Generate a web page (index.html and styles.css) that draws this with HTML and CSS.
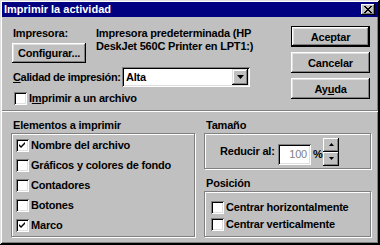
FILE: index.html
```html
<!DOCTYPE html>
<html lang="es">
<head>
    <meta charset="UTF-8">
    <title>Imprimir la actividad</title>
    <link rel="stylesheet" href="styles.css">
</head>
<body>
    <div class="window">
        <div class="titlebar">
            <span class="title">Imprimir la actividad</span>
            <span class="close">
                <svg width="8" height="7" viewBox="0 0 8 7"><path d="M0 0 L7 7 M1 0 L8 7 M7 0 L0 7 M8 0 L1 7" stroke="#000" stroke-width="1"/></svg>
            </span>
        </div>

        <div class="top">
            <div class="top-left">
                <div class="printer-row">
                    <div class="printer-col">
                        <div class="label">Impresora:</div>
                        <div class="btn btn-config">Confi<u>g</u>urar...</div>
                    </div>
                    <div class="printer-name">Impresora predeterminada (HP<br>DeskJet 560C Printer en LPT1:)</div>
                </div>
                <div class="quality-row">
                    <div class="quality-label"><u>C</u>alidad de impresión:</div>
                    <div class="select">
                        <span class="select-value">Alta</span>
                        <span class="select-arrow">
                            <svg width="7" height="4" viewBox="0 0 7 4"><path d="M0 0 H7 L3.5 4 Z" fill="#000"/></svg>
                        </span>
                    </div>
                </div>
                <div class="check-row file-row">
                    <span class="check"></span>
                    <span>I<u>m</u>primir a un archivo</span>
                </div>
            </div>
            <div class="buttons">
                <div class="btn btn-default">Aceptar</div>
                <div class="btn">Cancelar</div>
                <div class="btn">Ay<u>u</u>da</div>
            </div>
        </div>

        <div class="separator"></div>

        <div class="bottom">
            <div class="group group-items">
                <div class="group-label">Elementos a imprimir</div>
                <div class="frame items-frame">
                    <div class="check-row"><span class="check checked"></span><span>Nombre del archivo</span></div>
                    <div class="check-row"><span class="check"></span><span>Gráficos y colores de fondo</span></div>
                    <div class="check-row"><span class="check"></span><span>Contadores</span></div>
                    <div class="check-row"><span class="check"></span><span>Botones</span></div>
                    <div class="check-row"><span class="check checked"></span><span>Marco</span></div>
                </div>
            </div>
            <div class="side">
                <div class="group-label">Tamaño</div>
                <div class="frame size-frame">
                    <span class="reduce-label">Reducir al:</span>
                    <span class="input">100</span>
                    <span class="percent">%</span>
                    <span class="spinner">
                        <span class="spin">
                            <svg width="5" height="3" viewBox="0 0 5 3"><path d="M2.5 0 L5 3 H0 Z" fill="#000"/></svg>
                        </span>
                        <span class="spin">
                            <svg width="5" height="3" viewBox="0 0 5 3"><path d="M0 0 H5 L2.5 3 Z" fill="#000"/></svg>
                        </span>
                    </span>
                </div>
                <div class="group-label pos-label">Posición</div>
                <div class="frame pos-frame">
                    <div class="check-row"><span class="check"></span><span>Centrar horizontalmente</span></div>
                    <div class="check-row"><span class="check"></span><span>Centrar verticalmente</span></div>
                </div>
            </div>
        </div>
    </div>
</body>
</html>
```

FILE: styles.css
```css
body {
    margin: 0;
    background: #c0c0c0;
    font-family: "Liberation Sans", Arial, sans-serif;
    font-size: 11px;
    font-weight: bold;
    color: #000;
    letter-spacing: -0.2px;
    white-space: nowrap;
}
u {
    text-decoration: underline;
    text-underline-offset: 1px;
}
.window {
    width: 380px;
    height: 245px;
    box-sizing: border-box;
    padding: 2px 2px 4px 2px;
    background: #c0c0c0;
    box-shadow: inset -1px -1px #000, inset 1px 1px #dfdfdf,
                inset -2px -2px #000, inset 2px 2px #fff,
                inset -3px -3px #808080;
    display: flex;
    flex-direction: column;
}
.titlebar {
    height: 15px;
    background: #000080;
    color: #fff;
    display: flex;
    align-items: center;
    justify-content: space-between;
    padding: 0 3px 0 2px;
}
.title {
    line-height: 15px;
    letter-spacing: 0;
}
.close {
    width: 14px;
    height: 11px;
    background: #c0c0c0;
    box-shadow: inset -1px -1px #000, inset 1px 1px #fff, inset -2px -2px #808080;
    display: flex;
    align-items: center;
    justify-content: center;
}
.close svg {
    margin: -1px 0 0 -1px;
}

/* upper part */
.top {
    height: 93px;
    display: flex;
    padding: 10px 8px 0 11px;
    box-sizing: border-box;
}
.top-left {
    flex: 1;
}
.printer-row {
    display: flex;
}
.printer-col {
    width: 83px;
}
.label, .printer-name, .quality-label, .group-label {
    line-height: 13px;
}
.btn {
    height: 21px;
    box-sizing: border-box;
    display: flex;
    align-items: center;
    justify-content: center;
    background: #c0c0c0;
    box-shadow: inset -1px -1px #000, inset 1px 1px #fff,
                inset -2px -2px #808080, inset 2px 2px #dfdfdf;
}
.btn-config {
    width: 74px;
    height: 20px;
    margin: 3px 0 0 -1px;
}
.quality-row {
    display: flex;
    align-items: center;
    margin-top: 4px;
}
.quality-label {
    width: 109px;
    letter-spacing: -0.35px;
}
.select {
    width: 128px;
    height: 20px;
    box-sizing: border-box;
    background: #fff;
    box-shadow: inset 1px 1px #808080, inset -1px -1px #fff,
                inset 2px 2px #000, inset -2px -2px #dfdfdf;
    display: flex;
    align-items: center;
    justify-content: space-between;
    padding: 2px;
}
.select-value {
    padding-left: 2px;
}
.select-arrow {
    width: 16px;
    height: 16px;
    box-sizing: border-box;
    background: #c0c0c0;
    box-shadow: inset -1px -1px #000, inset 1px 1px #dfdfdf,
                inset -2px -2px #808080, inset 2px 2px #fff;
    display: flex;
    align-items: center;
    justify-content: center;
}
.check-row {
    display: flex;
    align-items: center;
    gap: 2px;
    height: 13px;
    line-height: 13px;
}
.file-row {
    margin: 5px 0 0 1px;
}
.check {
    width: 13px;
    height: 13px;
    box-sizing: border-box;
    background: #fff;
    box-shadow: inset 1px 1px #808080, inset -1px -1px #fff,
                inset 2px 2px #000, inset -2px -2px #dfdfdf;
    flex: none;
}
.check.checked {
    background: #fff url("data:image/svg+xml,%3Csvg xmlns='http://www.w3.org/2000/svg' width='13' height='13'%3E%3Cpath d='M3 5 L5 7 L9 3 V5 L5 9 L3 7 Z' fill='%23000'/%3E%3C/svg%3E") no-repeat;
}
.buttons {
    width: 79px;
    display: flex;
    flex-direction: column;
    gap: 5px;
    margin-top: -1px;
}
.btn-default {
    box-shadow: inset 0 0 0 1px #000,
                inset -2px -2px #000, inset 2px 2px #fff,
                inset -3px -3px #808080, inset 3px 3px #dfdfdf;
}

.separator {
    border-top: 1px solid #808080;
    border-bottom: 1px solid #fff;
}

/* lower part */
.bottom {
    flex: 1;
    display: flex;
    gap: 9px;
    padding: 0 7px 0 9px;
}
.group-label {
    margin: 7px 0 1px 2px;
}
.frame {
    border: 1px solid #808080;
    box-shadow: inset 1px 1px #fff, 1px 1px #fff;
    box-sizing: border-box;
}
.group-items {
    width: 184px;
}
.items-frame {
    height: 104px;
    padding: 5px 0 0 4px;
    display: flex;
    flex-direction: column;
    gap: 7px;
}
.side {
    flex: 1;
}
.size-frame {
    height: 36px;
    display: flex;
    align-items: center;
    padding-left: 15px;
}
.reduce-label {
    width: 58px;
}
.input {
    width: 33px;
    height: 21px;
    box-sizing: border-box;
    background: #fff;
    color: #808080;
    font-weight: normal;
    box-shadow: inset 1px 1px #808080, inset -1px -1px #fff,
                inset 2px 2px #000, inset -2px -2px #dfdfdf;
    text-align: right;
    line-height: 20px;
    padding-right: 4px;
    margin-top: 6px;
}
.percent {
    margin: 6px 0 0 2px;
    width: 9px;
}
.spinner {
    display: flex;
    flex-direction: column;
    margin: 1px 0 0 1px;
}
.spin {
    width: 16px;
    height: 14px;
    box-sizing: border-box;
    background: #c0c0c0;
    box-shadow: inset -1px -1px #000, inset 1px 1px #fff, inset -2px -2px #808080;
    display: flex;
    align-items: center;
    justify-content: center;
}
.pos-label {
    margin-top: 8px;
}
.pos-frame {
    height: 46px;
    padding: 9px 0 0 6px;
    display: flex;
    flex-direction: column;
    gap: 4px;
}
```
